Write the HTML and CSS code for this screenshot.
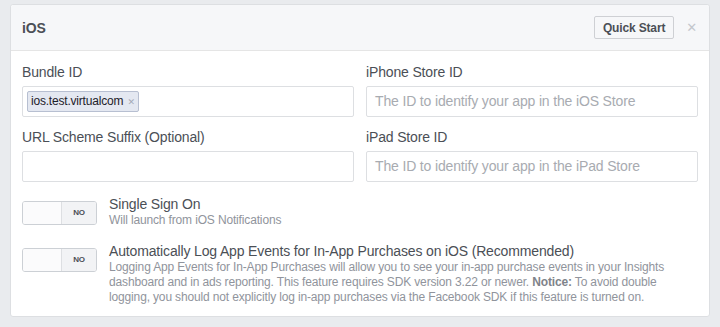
FILE: index.html
```html
<!DOCTYPE html>
<html lang="en">
<head>
    <meta charset="UTF-8">
    <title>iOS Settings</title>
    <link rel="stylesheet" href="styles.css">
</head>
<body>

<div class="card">
    <div class="card-header">
        <span class="title">iOS</span>
        <div class="header-actions">
            <button class="btn">Quick Start</button>
            <span class="close">&#x2715;</span>
        </div>
    </div>
    <div class="card-body">
        <div class="grid">
            <div class="field">
                <label>Bundle ID</label>
                <div class="input tags">
                    <span class="tag">ios.test.virtualcom <span class="tag-x">&#x2715;</span></span>
                </div>
            </div>
            <div class="field">
                <label>iPhone Store ID</label>
                <div class="input placeholder">The ID to identify your app in the iOS Store</div>
            </div>
            <div class="field">
                <label>URL Scheme Suffix (Optional)</label>
                <div class="input"></div>
            </div>
            <div class="field">
                <label>iPad Store ID</label>
                <div class="input placeholder">The ID to identify your app in the iPad Store</div>
            </div>
        </div>

        <div class="option">
            <div class="toggle"><span class="knob"></span><span class="state">NO</span></div>
            <div class="option-text">
                <div class="option-title">Single Sign On</div>
                <div class="option-desc">Will launch from iOS Notifications</div>
            </div>
        </div>
        <div class="option">
            <div class="toggle"><span class="knob"></span><span class="state">NO</span></div>
            <div class="option-text">
                <div class="option-title">Automatically Log App Events for In-App Purchases on iOS (Recommended)</div>
                <div class="option-desc">Logging App Events for In-App Purchases will allow you to see your in-app purchase events in your Insights dashboard and in ads reporting. This feature requires SDK version 3.22 or newer. <b>Notice:</b> To avoid double logging, you should not explicitly log in-app purchases via the Facebook SDK if this feature is turned on.</div>
            </div>
        </div>
    </div>
</div>

</body>
</html>
```

FILE: styles.css
```css
body {
    font-family: "Liberation Sans", Arial, sans-serif;
    background-color: #e9ebee;
    margin: 0;
    padding: 4px 10px 0 10px;
    color: #4b4f56;
    letter-spacing: -0.15px;
}
.card {
    background-color: white;
    border: 1px solid #dddfe2;
    border-radius: 3px;
}
.card-header {
    display: flex;
    justify-content: space-between;
    align-items: center;
    height: 45px;
    padding: 0 12px 0 11px;
    background-color: #f6f7f9;
    border-bottom: 1px solid #e5e5e5;
    border-radius: 3px 3px 0 0;
}
.title {
    font-size: 14px;
    font-weight: bold;
}
.header-actions {
    display: flex;
    align-items: center;
    gap: 12px;
}
.btn {
    font-family: inherit;
    font-size: 12px;
    font-weight: bold;
    letter-spacing: -0.15px;
    color: #4b4f56;
    background-color: #f6f7f9;
    border: 1px solid #ced0d4;
    border-radius: 2px;
    height: 23px;
    padding: 0 8px;
}
.close {
    font-size: 13px;
    font-weight: bold;
    color: #c4c7cd;
    font-family: "DejaVu Sans", sans-serif;
}
.card-body {
    padding: 12px 11px 11px 11px;
}
.grid {
    display: grid;
    grid-template-columns: 1fr 1fr;
    column-gap: 12px;
    row-gap: 11px;
}
.field label {
    display: block;
    font-size: 14px;
    line-height: 18px;
    margin-bottom: 5px;
}
.input {
    box-sizing: border-box;
    height: 31px;
    border: 1px solid #dddfe2;
    border-radius: 2px;
    font-size: 14px;
    line-height: 29px;
    padding: 0 8px;
}
.placeholder {
    color: #a8abb1;
}
.tags {
    display: flex;
    align-items: center;
    padding: 0 4px;
}
.tag {
    font-size: 12px;
    line-height: 18px;
    color: #1d2129;
    background-color: #e4e8f1;
    border: 1px solid #b7bfd1;
    border-radius: 2px;
    padding: 0 3px;
    letter-spacing: -0.2px;
}
.tag-x {
    font-family: "DejaVu Sans", sans-serif;
    font-size: 9px;
    color: #a5abb8;
    margin-left: 1px;
}
.option {
    display: flex;
    align-items: flex-start;
    margin-top: 13px;
}
.option + .option {
    margin-top: 14px;
}
.toggle {
    display: flex;
    box-sizing: border-box;
    width: 75px;
    height: 24px;
    margin-top: 6px;
    border: 1px solid #ccd0d5;
    border-radius: 3px;
    overflow: hidden;
    flex-shrink: 0;
}
.knob {
    width: 38px;
    background-color: #fbfbfc;
}
.state {
    flex: 1;
    background-color: #f2f3f5;
    border-left: 1px solid #dddfe2;
    font-size: 8px;
    font-weight: bold;
    color: #4b4f56;
    text-align: center;
    line-height: 22px;
}
.option-text {
    margin-left: 12px;
    flex: 1;
}
.option-title {
    font-size: 14px;
    line-height: 18px;
}
.option-desc {
    font-size: 12px;
    line-height: 15px;
    color: #90949c;
}
.option-desc b {
    color: #7f838a;
}
```
